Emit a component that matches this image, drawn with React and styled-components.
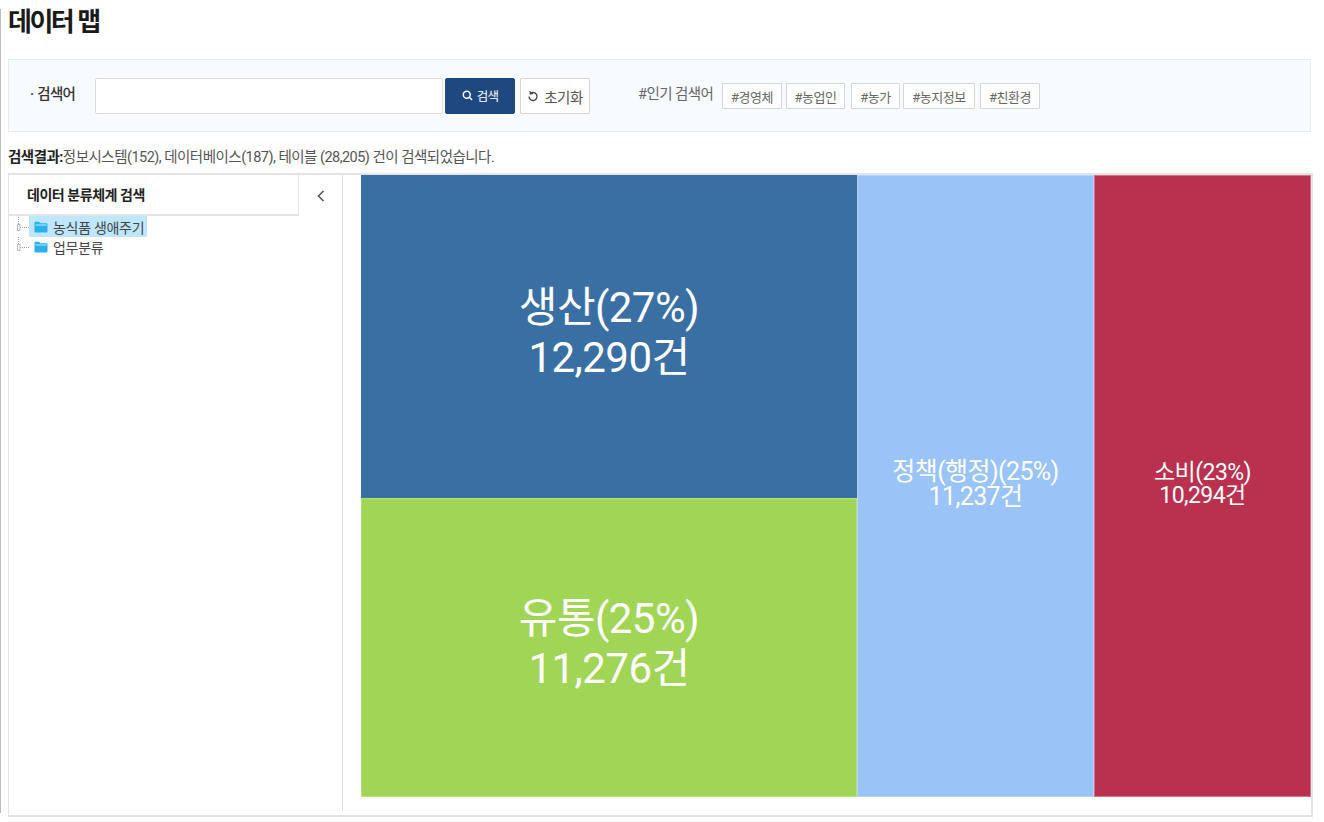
import React from 'react';
import styled, { createGlobalStyle } from 'styled-components';

const GlobalStyle = createGlobalStyle`
  html, body {
    margin: 0;
    padding: 0;
    background: #fff;
  }
  * {
    box-sizing: border-box;
  }
  body {
    font-family: Roboto, "Noto Sans CJK KR", "Noto Sans", sans-serif;
    color: #222;
  }
`;

const Page = styled.div`
  width: 1324px;
  height: 822px;
  overflow: hidden;
`;

const Frame = styled.div`
  height: 804px;
  margin-top: 9px;
  padding: 0 12px 0 7px;
  border-left: 1px solid #bdbdbd;
`;

const Title = styled.h1`
  margin: 0;
  height: 50px;
  font-size: 26px;
  line-height: 27px;
  font-weight: 700;
  letter-spacing: -2.5px;
  word-spacing: 1px;
  color: #1a1a1a;
`;

const SearchPanel = styled.div`
  width: 1303px;
  height: 73px;
  display: flex;
  align-items: flex-start;
  padding-top: 18px;
  background: #f7faff;
  border: 1px solid #e3ebf3;
`;

const Label = styled.label`
  width: 86px;
  padding-left: 21px;
  height: 35px;
  line-height: 33px;
  font-size: 14.5px;
  font-weight: 500;
  letter-spacing: -0.7px;
  word-spacing: 1px;
  color: #333;
`;

const Input = styled.input`
  width: 348px;
  height: 36px;
  background: #fff;
  border: 1px solid #dcdcdc;
  border-radius: 2px;
  outline: none;
`;

const SearchButton = styled.button`
  width: 70px;
  height: 36px;
  margin-left: 2px;
  display: flex;
  align-items: center;
  justify-content: center;
  gap: 4px;
  background: #1f4880;
  border: 1px solid #1f4880;
  border-radius: 2px;
  color: #fff;
  font-family: inherit;
  font-size: 12.5px;
  letter-spacing: -0.7px;
  padding: 0 0 2px;
`;

const ResetButton = styled.button`
  width: 70px;
  height: 36px;
  margin-left: 5px;
  display: flex;
  align-items: center;
  justify-content: center;
  gap: 5px;
  background: #fff;
  border: 1px solid #d6d6d6;
  border-radius: 1px;
  color: #555;
  font-family: inherit;
  font-size: 14.5px;
  letter-spacing: -0.5px;
  padding: 0;
`;

const PopularLabel = styled.span`
  margin-left: 48px;
  width: 84px;
  height: 32px;
  line-height: 33px;
  font-size: 14.5px;
  letter-spacing: -0.55px;
  color: #666;
`;

const TagList = styled.div`
  display: flex;
  margin-top: 5px;
`;

const Tag = styled.span`
  width: ${({ $w }) => $w}px;
  margin-left: ${({ $gap }) => $gap}px;
  height: 26px;
  display: flex;
  align-items: center;
  justify-content: center;
  background: #fff;
  border: 1px solid #d6d6d6;
  border-radius: 1px;
  font-size: 13px;
  letter-spacing: -0.45px;
  color: #666;
`;

const ResultLine = styled.p`
  margin: 0;
  height: 41px;
  padding-top: 16px;
  line-height: 20px;
  font-size: 14.5px;
  letter-spacing: -0.52px;
  color: #555;
  strong {
    font-weight: 700;
    color: #222;
  }
`;

const Board = styled.div`
  width: 1305px;
  height: 644px;
  display: flex;
  border: 1px solid #e4e4e4;
  border-width: 2px 2px 2px 1px;
`;

const Sidebar = styled.aside`
  width: 334px;
  height: 636px;
  border-right: 1px solid #e0e0e0;
`;

const SidebarHead = styled.div`
  display: flex;
  height: 41px;
`;

const SidebarTitle = styled.div`
  width: 290px;
  padding-left: 18px;
  line-height: 40px;
  font-size: 14px;
  font-weight: 700;
  letter-spacing: -0.45px;
  color: #222;
  border-right: 1px solid #e4e4e4;
  border-bottom: 2px solid #e4e4e4;
`;

const Collapse = styled.div`
  flex: 1;
  display: flex;
  align-items: center;
  justify-content: center;
`;

const Tree = styled.ul`
  list-style: none;
  margin: 0;
  padding: 0 0 0 8px;
`;

const TreeRow = styled.li`
  display: flex;
  align-items: center;
`;

const Connector = styled.svg`
  width: 12px;
  height: 20px;
  flex: none;
`;

const NodeLabel = styled.span`
  display: flex;
  align-items: center;
  gap: 5px;
  height: ${({ $active }) => ($active ? 21 : 20)}px;
  padding: 0 3px 0 5px;
  font-size: 14px;
  letter-spacing: -0.3px;
  color: #444;
  background: ${({ $active }) => ($active ? '#bfe6ff' : 'transparent')};
`;

const Treemap = styled.div`
  margin-left: 18px;
  display: grid;
  grid-template-columns: 496px 237px 217px;
  grid-template-rows: 323px 299px;
  width: 950px;
  height: 622px;
`;

const Cell = styled.div`
  grid-column: ${({ $col }) => $col};
  grid-row: ${({ $row }) => $row};
  display: flex;
  flex-direction: column;
  align-items: center;
  justify-content: center;
  padding-bottom: ${({ $lift }) => $lift}px;
  background: ${({ $bg }) => $bg};
  border: 1px solid ${({ $edge }) => $edge};
  color: #fff;
  font-size: ${({ $size }) => $size}px;
  line-height: ${({ $lh }) => $lh}px;
  letter-spacing: ${({ $track }) => $track}px;
`;

const FolderIcon = () => (
  <svg width="14" height="12" viewBox="0 0 14 12">
    <path d="M0.5 2.2C0.5 1.3 1 .8 1.8 .8H5l1.4 1.5h5.8c.8 0 1.3.5 1.3 1.3v6.6c0 .8-.5 1.3-1.3 1.3H1.8C1 11.5.5 11 .5 10.2z" fill="#27b2ee" />
    <path d="M1.5 3.4h11v1.2h-11z" fill="#a8e4fb" />
  </svg>
);

const TreeLine = () => (
  <Connector viewBox="0 0 12 20">
    <path d="M1.5 0V10.5H12" fill="none" stroke="#999" strokeWidth="1" strokeDasharray="1 1" />
    <rect x="0.5" y="7.5" width="2.5" height="6" fill="#fff" stroke="#bbb" strokeWidth="1" />
  </Connector>
);

const tags = [
  ['#경영체', 60, 0],
  ['#농업인', 59, 4],
  ['#농가', 49, 6],
  ['#농지정보', 72, 3],
  ['#친환경', 60, 5],
];

const cells = [
  { name: '생산(27%)', count: '12,290건', bg: '#3a6fa4', edge: '#3a6fa4', size: 42, lh: 50, track: -0.55, lift: 7, col: '1', row: '1' },
  { name: '유통(25%)', count: '11,276건', bg: '#a1d556', edge: '#b5e07a', size: 42, lh: 50, track: -0.55, lift: 8, col: '1', row: '2' },
  { name: '정책(행정)(25%)', count: '11,237건', bg: '#9ac3f7', edge: '#b5d4fa', size: 25, lh: 25, track: -0.6, lift: 4, col: '2', row: '1 / span 2' },
  { name: '소비(23%)', count: '10,294건', bg: '#b9314f', edge: '#d4758a', size: 23, lh: 23, track: -0.55, lift: 4, col: '3', row: '1 / span 2' },
];

export default function App() {
  return (
    <Page>
      <GlobalStyle />
      <Frame>
        <Title>데이터 맵</Title>
        <SearchPanel>
          <Label>· 검색어</Label>
          <Input />
          <SearchButton>
            <svg width="11" height="11" viewBox="0 0 12 12" fill="none" stroke="#fff" strokeWidth="1.6">
              <circle cx="5.2" cy="5.2" r="3.8" />
              <path d="M8 8l3 3" />
            </svg>
            검색
          </SearchButton>
          <ResetButton>
            <svg width="12" height="13" viewBox="0 0 12 13" fill="none" stroke="#444" strokeWidth="1.3">
              <path d="M3.2 3.6A4 4 0 1 1 2 6.6" />
              <path d="M3 1l.4 2.9 2.6-.5" />
            </svg>
            초기화
          </ResetButton>
          <PopularLabel>#인기 검색어</PopularLabel>
          <TagList>
            {tags.map(([label, w, gap]) => (
              <Tag key={label} $w={w} $gap={gap}>{label}</Tag>
            ))}
          </TagList>
        </SearchPanel>
        <ResultLine>
          <strong>검색결과:</strong>정보시스템(152), 데이터베이스(187), 테이블 (28,205) 건이 검색되었습니다.
        </ResultLine>
        <Board>
          <Sidebar>
            <SidebarHead>
              <SidebarTitle>데이터 분류체계 검색</SidebarTitle>
              <Collapse>
                <svg width="10" height="14" viewBox="0 0 10 14" fill="none" stroke="#555" strokeWidth="1.6">
                  <path d="M7.5 2L2.5 7l5 5" />
                </svg>
              </Collapse>
            </SidebarHead>
            <Tree>
              <TreeRow>
                <TreeLine />
                <NodeLabel $active><FolderIcon />농식품 생애주기</NodeLabel>
              </TreeRow>
              <TreeRow>
                <TreeLine />
                <NodeLabel><FolderIcon />업무분류</NodeLabel>
              </TreeRow>
            </Tree>
          </Sidebar>
          <Treemap>
            {cells.map((c) => (
              <Cell key={c.name} $bg={c.bg} $edge={c.edge} $size={c.size} $lh={c.lh} $track={c.track} $lift={c.lift} $col={c.col} $row={c.row}>
                <span>{c.name}</span>
                <span>{c.count}</span>
              </Cell>
            ))}
          </Treemap>
        </Board>
      </Frame>
    </Page>
  );
}
